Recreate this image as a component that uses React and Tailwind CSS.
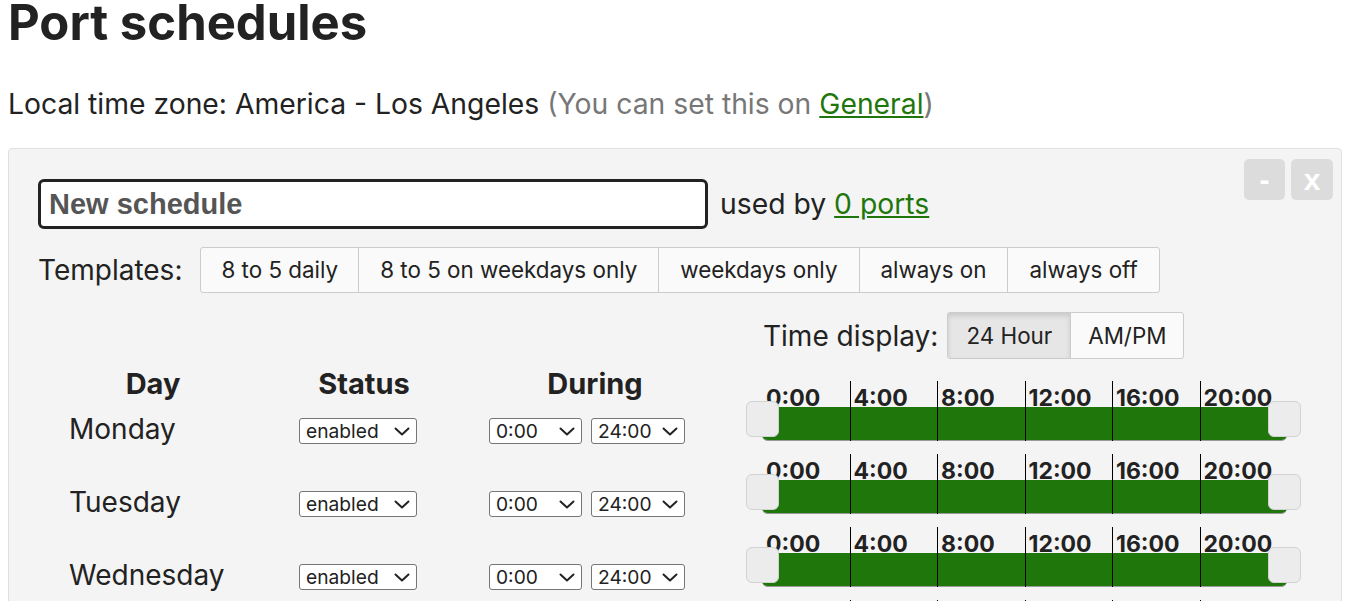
import React from 'react';

const days = ['Monday', 'Tuesday', 'Wednesday', 'Thursday', 'Friday', 'Saturday', 'Sunday'];
const templates = ['8 to 5 daily', '8 to 5 on weekdays only', 'weekdays only', 'always on', 'always off'];
const hours = ['0:00', '4:00', '8:00', '12:00', '16:00', '20:00'];

const Slider = () => (
  <div className="relative ml-[16px] h-[60px] w-[525px]">
    <div className="absolute inset-x-0 bottom-0 h-[34px] rounded-b-[6px] border-b border-[#9a9a9a] bg-[#1f770c]" />
    <div className="relative grid h-full grid-cols-6">
      {hours.map((h, i) => (
        <div
          key={h}
          className={i ? 'border-l border-black pl-[3px] pt-[3px] text-[23px] font-bold leading-[28px]' : 'pl-[4px] pt-[3px] text-[23px] font-bold leading-[28px]'}
        >
          {h}
        </div>
      ))}
    </div>
    <div className="absolute left-[-16px] top-[20px] h-[36px] w-[33px] rounded-[6px] border border-[#d2d2d2] bg-[#ececec]" />
    <div className="absolute right-[-14px] top-[20px] h-[36px] w-[33px] rounded-[6px] border border-[#d2d2d2] bg-[#ececec]" />
  </div>
);

const Select = ({ value, options, width }) => (
  <div className={`relative ${width}`}>
    <select
      defaultValue={value}
      className="h-[26px] w-full appearance-none rounded-[3px] border border-[#767676] bg-white pl-[6px] text-[19.2px] leading-[24px] text-[#222]"
    >
      {options.map((o) => (
        <option key={o}>{o}</option>
      ))}
    </select>
    <svg
      className="pointer-events-none absolute right-[7px] top-[9px]"
      width="16"
      height="9"
      viewBox="0 0 16 9"
      fill="none"
      stroke="#222"
      strokeWidth="2"
      strokeLinecap="round"
      strokeLinejoin="round"
    >
      <path d="M1.5 1.5 L8 7.5 L14.5 1.5" />
    </svg>
  </div>
);

const App = () => {
  return (
    <div className="min-h-screen bg-white pl-[8px] pr-[12px] font-['Inter',sans-serif] text-[#222]">
      <h1 className="mt-[-2px] text-[49px] font-bold leading-[49px]">Port schedules</h1>
      <p className="mt-[41px] text-[28.3px] leading-[32px]">
        Local time zone: America - Los Angeles{' '}
        <span className="text-[#777]">
          (You can set this on{' '}
          <a href="#" className="text-[#1f770c] underline">
            General
          </a>
          )
        </span>
      </p>

      <div className="relative mt-[28px] rounded-[4px] border border-[#e0e0e0] bg-[#f4f4f4] pb-[40px] pl-[29px] pt-[30px]">
        <div className="absolute right-[8px] top-[10px] flex gap-[6px]">
          <button className="flex h-[41px] w-[41px] items-center justify-center rounded-[5px] bg-[#dcdcdc] font-['Liberation_Sans',sans-serif] text-[30px] font-bold leading-none text-white">
            -
          </button>
          <button className="flex h-[41px] w-[42px] items-center justify-center rounded-[5px] bg-[#dcdcdc] font-['Liberation_Sans',sans-serif] text-[30px] font-bold leading-none text-white">
            x
          </button>
        </div>

        <div className="flex items-center gap-[12px]">
          <input
            defaultValue="New schedule"
            className="h-[50px] w-[670px] rounded-[6px] border-[3px] border-[#222] bg-white pl-[8px] font-['Liberation_Sans',sans-serif] text-[29px] font-bold text-[#555] outline-none"
          />
          <span className="text-[28.3px]">
            used by{' '}
            <a href="#" className="text-[#1f770c] underline">
              0 ports
            </a>
          </span>
        </div>

        <div className="mt-[18px] flex items-center gap-[18px]">
          <span className="text-[28px]">Templates:</span>
          <div className="flex h-[46px] rounded-[3px] border border-[#cccccc] bg-[#fafafa]">
            {templates.map((t, i) => (
              <button
                key={t}
                className={i ? 'border-l border-[#cccccc] px-[21px] text-[22.4px]' : 'px-[20px] text-[22.4px]'}
              >
                {t}
              </button>
            ))}
          </div>
        </div>

        <div className="mt-[19px] flex items-start">
          <div className="mt-[59px] w-[708px]">
            <div className="grid h-[26px] grid-cols-[230px_192px_270px] text-center text-[29px] font-bold leading-[26px]">
              <div>Day</div>
              <div>Status</div>
              <div>During</div>
            </div>
            {days.map((d) => (
              <div key={d} className="grid h-[73px] grid-cols-[230px_192px_270px]">
                <div className="pl-[31px] pt-[16px] text-[28px] leading-[32px]">{d}</div>
                <div className="flex justify-center pr-[12px] pt-[21px]">
                  <Select value="enabled" options={['enabled', 'disabled']} width="w-[118px]" />
                </div>
                <div className="flex justify-center gap-[9px] pr-[16px] pt-[21px]">
                  <Select value="0:00" options={['0:00', '8:00']} width="w-[93px]" />
                  <Select value="24:00" options={['24:00', '17:00']} width="w-[94px]" />
                </div>
              </div>
            ))}
          </div>

          <div className="flex flex-col">
            <div className="ml-[17px] flex items-center gap-[9px]">
              <span className="text-[28px]">Time display:</span>
              <div className="flex h-[47px] rounded-[3px] border border-[#cccccc] bg-[#fafafa]">
                <button className="w-[122px] bg-[#e6e6e6] text-[22.4px] shadow-[inset_0_3px_5px_rgba(0,0,0,0.125)]">
                  24 Hour
                </button>
                <button className="w-[113px] border-l border-[#cccccc] text-[22.4px]">AM/PM</button>
              </div>
            </div>
            <div className="mt-[22px] flex flex-col gap-[13px]">
              {days.map((d) => (
                <Slider key={d} />
              ))}
            </div>
          </div>
        </div>
      </div>
    </div>
  );
};

export default App;
